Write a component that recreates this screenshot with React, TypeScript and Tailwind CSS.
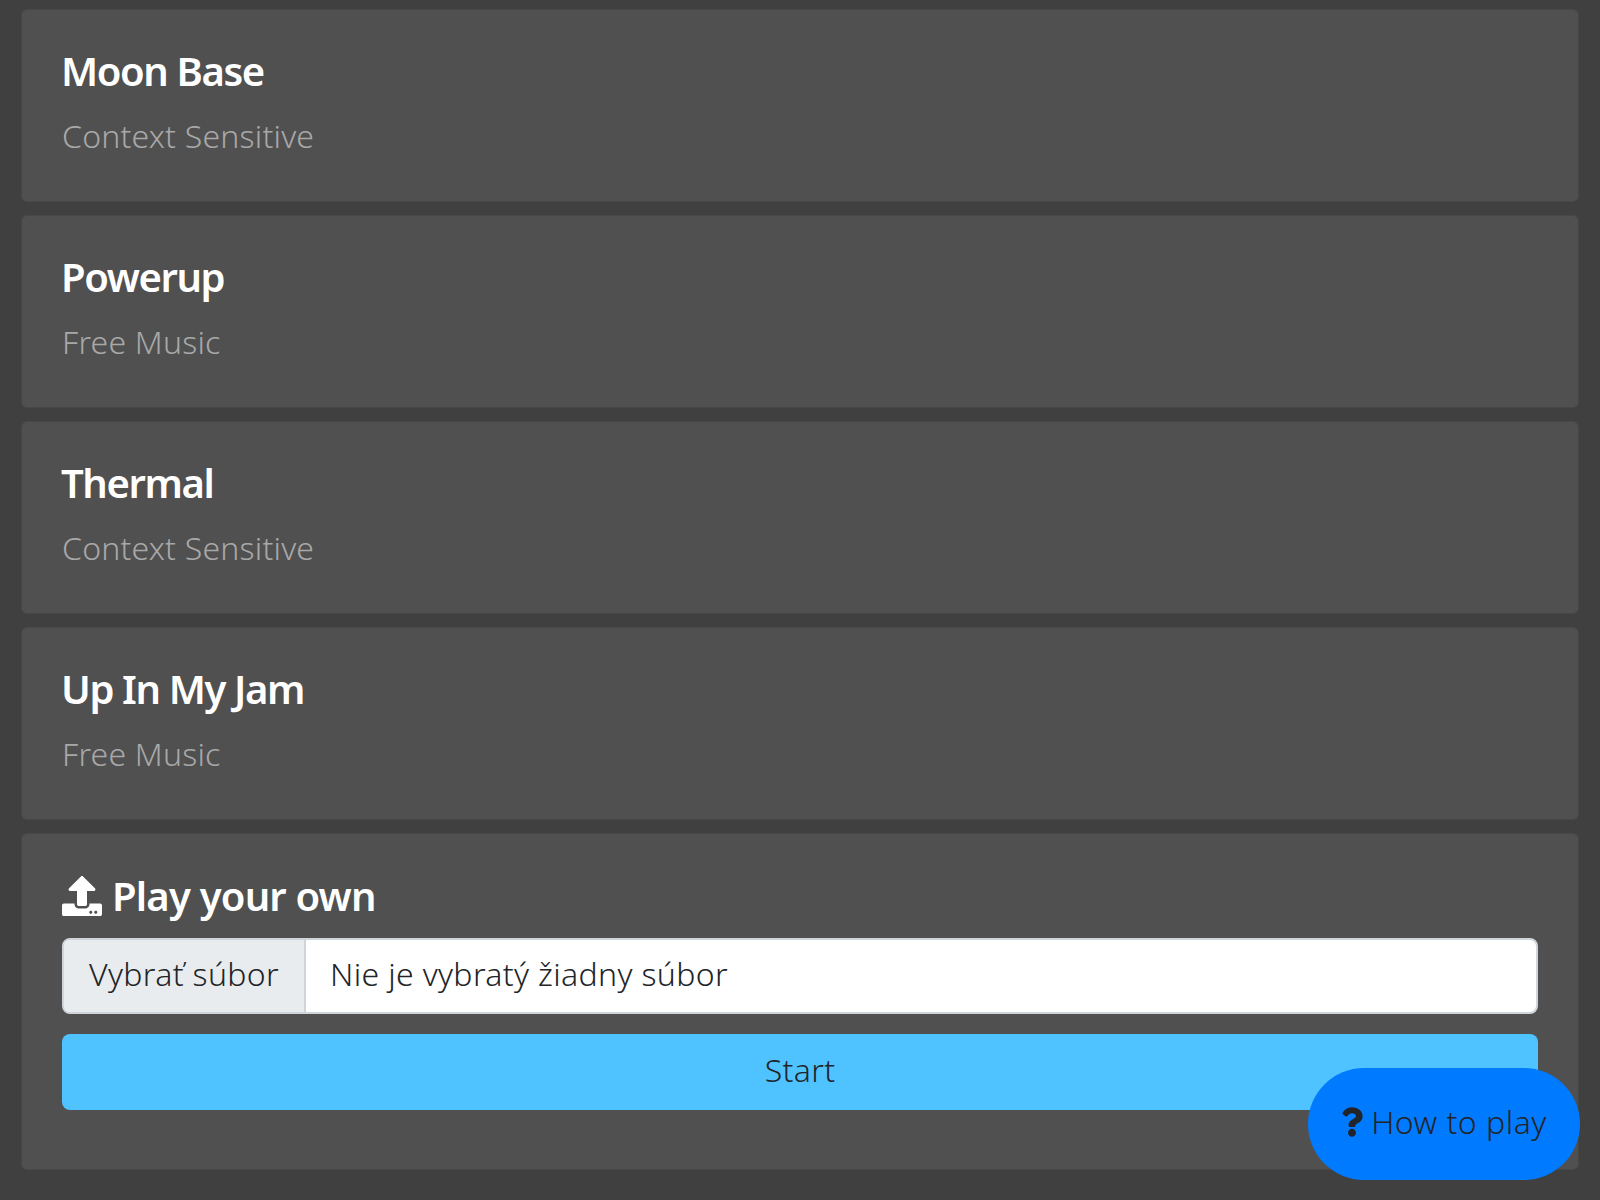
import React from "react";
import { FaQuestion, FaUpload } from "react-icons/fa";

const tracks = [
  { title: "Moon Base", tag: "Context Sensitive" },
  { title: "Powerup", tag: "Free Music" },
  { title: "Thermal", tag: "Context Sensitive" },
  { title: "Up In My Jam", tag: "Free Music" },
];

const Card = ({ children }: { children: React.ReactNode }) => (
  <div className="rounded-md border border-[#474747] bg-[#505050] px-10 pt-[33px]">{children}</div>
);

export default function App() {
  return (
    <div className="relative flex h-[1200px] flex-col gap-[13px] overflow-hidden bg-[#404040] px-[21px] pt-[9px] font-['Noto_Sans',sans-serif]">
      {tracks.map((t) => (
        <Card key={t.title}>
          <div className="h-[158px]">
            <h4 className="-ml-px h-[56px] text-[40px] leading-[56px] font-semibold tracking-[-1.4px] text-white">{t.title}</h4>
            <p className="mt-[12px] h-[50px] text-[32px] leading-[50px] font-light tracking-[0.2px] text-[#a8a8a8]">{t.tag}</p>
          </div>
        </Card>
      ))}
      <Card>
        <div className="h-[302px]">
          <h4 className="flex h-[57px] items-center gap-[10px] text-[40px] leading-[56px] font-semibold tracking-[-0.8px] text-white">
            <FaUpload className="h-10 w-10" />
            Play your own
          </h4>
          <div className="mt-[14px] flex h-[76px] overflow-hidden rounded-lg border-2 border-[#ced4da] bg-white text-[32px] font-light tracking-[0.35px] text-[#212529]">
            <span className="flex w-[242px] items-center justify-center border-r-2 border-[#ced4da] bg-[#e9ecef] pb-[4px]">Vybrať súbor</span>
            <span className="flex items-center pb-[4px] pl-6">Nie je vybratý žiadny súbor</span>
          </div>
          <button className="mt-5 h-[76px] w-full rounded-lg bg-[#4fc3ff] pb-[4px] text-[32px] font-light tracking-[0.35px] text-[#212529]">Start</button>
        </div>
      </Card>
      <button className="absolute top-[1068px] left-[1308px] flex h-[112px] w-[272px] items-center justify-center gap-2 rounded-full bg-[#007bff] pb-[4px] text-[32px] font-light tracking-[0.5px] text-[#212529]">
        <FaQuestion className="h-[32px] w-[22px]" />
        How to play
      </button>
    </div>
  );
}
